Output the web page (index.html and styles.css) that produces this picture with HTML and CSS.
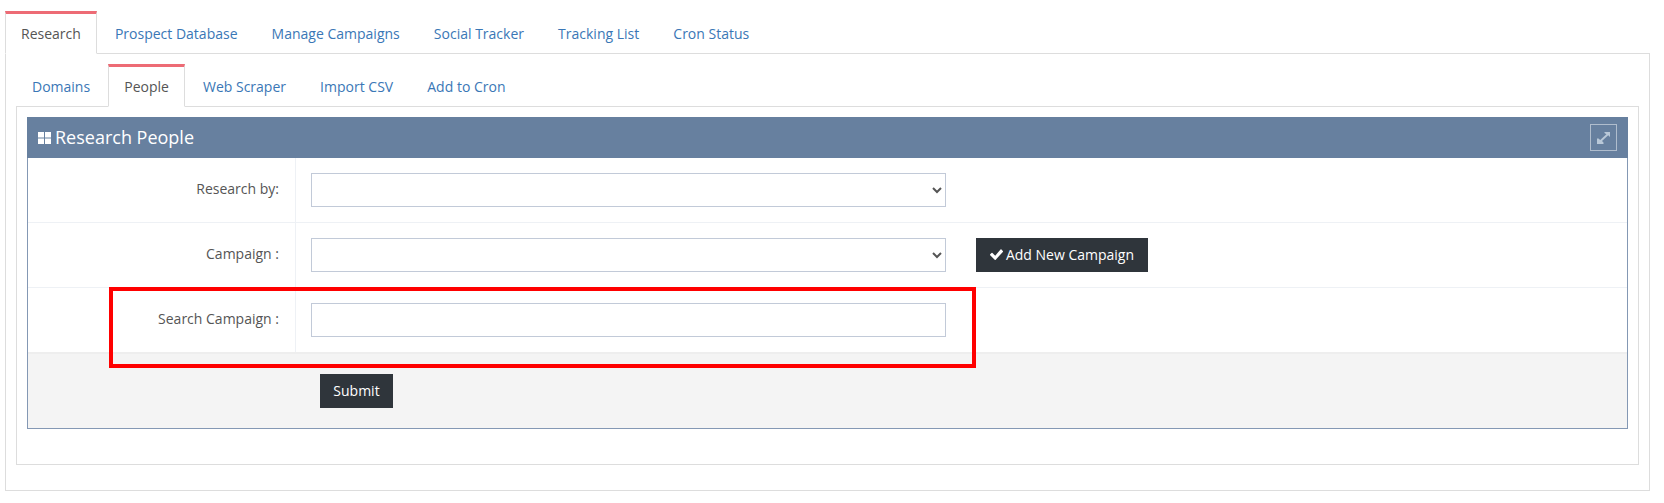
FILE: index.html
```html
<!DOCTYPE html>
<html lang="en">
<head>
<meta charset="utf-8">
<title>Research People</title>
<link rel="stylesheet" href="styles.css">
</head>
<body>
<div class="page">
  <ul class="tabs">
    <li class="tab active"><a>Research</a></li>
    <li class="tab"><a>Prospect Database</a></li>
    <li class="tab"><a>Manage Campaigns</a></li>
    <li class="tab"><a>Social Tracker</a></li>
    <li class="tab"><a>Tracking List</a></li>
    <li class="tab"><a>Cron Status</a></li>
  </ul>
  <div class="pane outer">
    <ul class="tabs">
      <li class="tab"><a>Domains</a></li>
      <li class="tab active"><a>People</a></li>
      <li class="tab"><a>Web Scraper</a></li>
      <li class="tab"><a>Import CSV</a></li>
      <li class="tab"><a>Add to Cron</a></li>
    </ul>
    <div class="pane inner">
      <section class="panel">
        <header class="panel-head">
          <h2 class="panel-title">
            <svg class="icon-grid" width="13" height="12" viewBox="0 0 13 12"><path fill="#fff" d="M0 0h6v5.500H0zM7 0h6v5.500H7zM0 6.500h6V12H0zM7 6.500h6V12H7z"/></svg>
            Research People
          </h2>
          <button class="expand" type="button" aria-label="Fullscreen">
            <svg width="13" height="12" viewBox="0 0 13 12"><path fill="#b9c8d8" d="M7.500 0H13v5l-1.800-1.700L5 9l1.500 1.500V12H0V6.500h1.500L3.200 8l6.200-5.700L7.500 1z"/></svg>
          </button>
        </header>
        <form class="form">
          <div class="row">
            <label class="label">Research by:</label>
            <div class="field"><select class="control"></select></div>
          </div>
          <div class="row">
            <label class="label">Campaign :</label>
            <div class="field">
              <select class="control"></select>
              <button class="btn btn-add" type="button">
                <svg width="13" height="11" viewBox="0 0 13 11"><path fill="#fff" d="M4.700 10.800.2 6.300a.7.7 0 0 1 0-1L1.500 4a.7.7 0 0 1 1 0l2.700 2.700L10.500.6a.7.7 0 0 1 1 0l1.300 1.300a.7.7 0 0 1 0 1l-7.100 7.900a.6.6 0 0 1-1 0z"/></svg>
                Add New Campaign
              </button>
            </div>
          </div>
          <div class="row">
            <label class="label">Search Campaign :</label>
            <div class="field"><input class="control" type="text"></div>
          </div>
          <div class="actions"><button class="btn btn-submit" type="button">Submit</button></div>
        </form>
      </section>
    </div>
  </div>
  <div class="highlight"></div>
</div>
</body>
</html>
```
FILE: styles.css
```css
* { box-sizing: border-box; }
html, body { margin: 0; height: 100%; overflow: hidden; background: #fff; }
body { font-family: "Open Sans", sans-serif; font-size: 14px; color: #555; }
.page { position: relative; padding: 11px 14px 0 5px; }

.tabs { display: flex; list-style: none; margin: 0 0 -1px; padding: 0; position: relative; z-index: 1; }
.tab { height: 43px; padding: 0 15px; margin-right: 2.1px; border: 1px solid transparent; border-top-width: 3px; line-height: 39px; color: #3a77b6; white-space: nowrap; }
.tab.active { border-color: #ddd; border-top-color: #ed6b75; border-bottom-color: #fff; background: #fff; color: #555; }

.pane { border: 1px solid #ddd; background: #fff; }
.outer { padding: 10px 10px 25px; }
.inner { padding: 10px 10px 35px; }

.panel { border: 1px solid #8498b4; border-top: 0; }
.panel-head { display: flex; align-items: center; justify-content: space-between; height: 41px; margin: 0 -1px; padding: 0 11px; background: #67809f; }
.panel-title { margin: 0; font-size: 18px; font-weight: 400; line-height: 41px; color: #fff; display: flex; align-items: center; gap: 4px; }
.icon-grid { margin-top: 1px; }
.expand { display: flex; align-items: center; justify-content: center; width: 27px; height: 27px; padding: 0; border: 1px solid #b0bdcd; background: transparent; }

.row { display: grid; grid-template-columns: 268px 1fr; height: 65px; border-bottom: 1px solid #eef1f5; }
.label { padding: 0 16px 0 0; text-align: right; line-height: 61px; border-right: 1px solid #eef1f5; }
.field { display: flex; align-items: flex-start; gap: 30px; padding: 15px 0 0 15px; }
.control { display: block; width: 635px; height: 34px; padding: 6px 12px; border: 1px solid #c2cad8; border-radius: 0; background: #fff; color: #555; font: inherit; outline: 0; }

.btn { display: inline-flex; align-items: center; justify-content: center; gap: 3px; height: 34px; padding: 0 0 2px; border: 0; border-radius: 0; background: #2f353b; color: #fff; font: inherit; }
.btn-add { width: 172px; }
.btn-submit { width: 73px; }

.actions { height: 76px; margin-top: -1px; padding: 20px 0 0 292px; border-top: 2px solid #eee; background: #f4f4f4; }

.highlight { position: absolute; left: 109px; top: 287px; width: 867px; height: 81px; border: 4px solid #f00; z-index: 2; pointer-events: none; }
```
